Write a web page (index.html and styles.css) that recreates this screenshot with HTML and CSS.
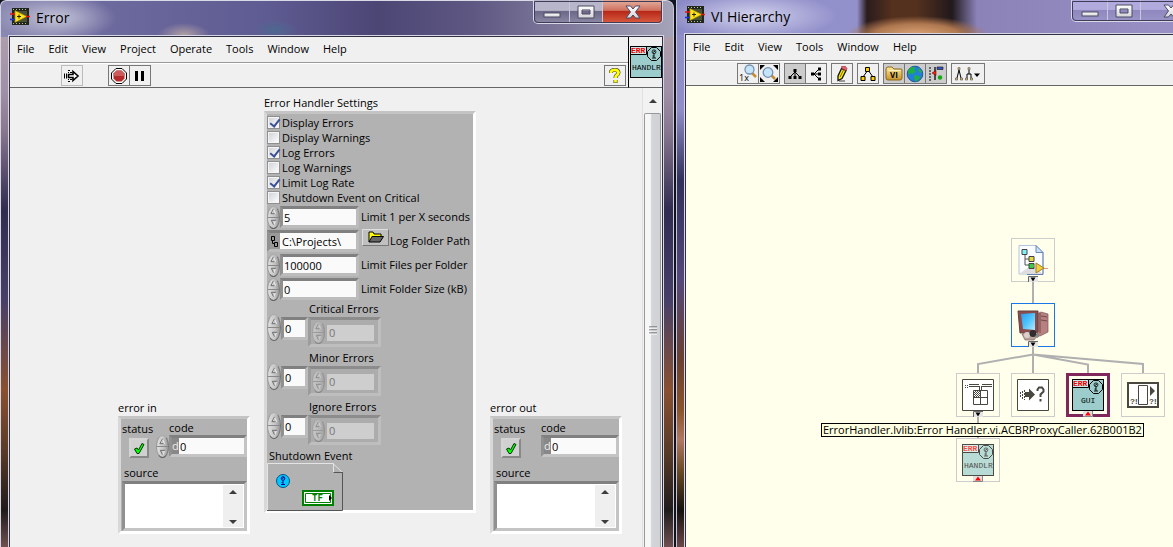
FILE: index.html
```html
<!DOCTYPE html>
<html lang="en">
<head>
<meta charset="utf-8">
<title>Error</title>
<link rel="stylesheet" href="styles.css">
</head>
<body>
<svg class="defs" aria-hidden="true">
  <defs>
    <linearGradient id="metal" x1="0" y1="0" x2="0" y2="1"><stop offset="0" stop-color="#fff"/><stop offset="1" stop-color="#d4d4d8"/></linearGradient>
    <linearGradient id="screen" x1="0" y1="0" x2="1" y2="1"><stop offset="0" stop-color="#2a9af0"/><stop offset=".5" stop-color="#4ec4fb"/><stop offset="1" stop-color="#b5e8ff"/></linearGradient>
    <linearGradient id="gold" x1="0" y1="0" x2="0" y2="1"><stop offset="0" stop-color="#ffeaa0"/><stop offset="1" stop-color="#c89428"/></linearGradient>
    <symbol id="app" viewBox="0 0 20 18">
      <rect x="2" y="0" width="17" height="17" fill="#20261c"/>
      <rect x="4" y="3" width="13" height="11" fill="#4b5137"/>
      <path d="M3 1.500h15M3 15.500h15" stroke="#b8c0a0" stroke-width="1" stroke-dasharray="1 2"/>
      <path d="M5 2.500L17 8.500L5 14.500z" fill="#ffe21a" stroke="#8a7600" stroke-width=".6"/>
      <path d="M7 8.500h4M9 6.500v4" stroke="#222"/>
      <path d="M0 6h5M16 8.500h4" stroke="#e11" stroke-width="1.600"/>
      <path d="M0 11.500h5" stroke="#13d" stroke-width="1.600"/>
    </symbol>
    <symbol id="min" viewBox="0 0 18 6"><rect x="1" y="1" width="16" height="4" fill="url(#metal)" stroke="#4a4b63"/></symbol>
    <symbol id="max" viewBox="0 0 18 14"><path d="M1 1h16v12H1zM5 5v4h8V5z" fill="url(#metal)" fill-rule="evenodd" stroke="#4a4b63"/></symbol>
    <symbol id="close" viewBox="0 0 16 14"><path d="M1 1h4.500L8 4L10.500 1H15L10.500 7L15 13H10.500L8 10L5.500 13H1L5.500 7z" fill="url(#metal)" stroke="#4a4b63"/></symbol>
    <symbol id="up" viewBox="0 0 8 8"><path d="M1.500 6.500L4 1.500L6.500 6.500" fill="none" stroke="#f4f4f4"/><path d="M1 6.500L4 1M1 6.500h4" fill="none" stroke="#606060"/></symbol>
    <symbol id="down" viewBox="0 0 8 8"><path d="M6.500 1.500L4 7" fill="none" stroke="#f4f4f4"/><path d="M7 1.500H1.500L4 6.500" fill="none" stroke="#606060"/></symbol>
    <symbol id="tri-up" viewBox="0 0 8 4"><path d="M0 4L4 0L8 4z" fill="#3c3c3c"/></symbol>
    <symbol id="tri-down" viewBox="0 0 8 4"><path d="M0 0L4 4L8 0z" fill="#3c3c3c"/></symbol>
    <symbol id="figure" viewBox="0 0 14 14">
      <path d="M4.500.5h5l4 4v5l-4 4h-5l-4-4v-5z" fill="#9ccccc" stroke="#000"/>
      <circle cx="7" cy="4.800" r="1.900" fill="none" stroke="#000" stroke-width=".8"/>
      <path d="M6 5.500l2-1.500M7 7v4M5 11h4M5.500 9h1.500" fill="none" stroke="#000" stroke-width=".9"/>
    </symbol>
    <symbol id="handler" viewBox="0 0 32 32">
      <rect x=".5" y=".5" width="31" height="31" fill="#9ccccc" stroke="#000"/>
      <path d="M.5.5h16v8H.5z" fill="#cfe6e6" stroke="#000"/>
      <text x="1" y="7" class="px red">ERR</text>
      <use href="#figure" x="17" y="1" width="14" height="14"/>
    </symbol>
    <symbol id="check" viewBox="0 0 12 13"><path d="M1.500 7l2.500-1l1.500 2L9 1.500l2 1L6 11.500H4z" fill="#0f0" stroke="#053305"/></symbol>
    <symbol id="tab-down" viewBox="0 0 10 6"><path d="M0 0h10v6H0z" fill="#e6e6e6"/><path d="M.5 6V.5H10" fill="none" stroke="#666"/><path d="M2.500 1.500h5L5 5.500z"/></symbol>
    <symbol id="tab-up" viewBox="0 0 10 6"><path d="M0 0h10v6H0z" fill="#e0e0e0"/><path d="M0 5.500h9.500V0" fill="none" stroke="#888"/><path d="M2 4.500h6L5 .5z" fill="#f00"/></symbol>
  </defs>
</svg>

<main class="desktop">
  <section class="window win-error">
    <header class="titlebar">
      <svg class="app-icon"><use href="#app"/></svg>
      <h1 class="title">Error</h1>
      <div class="caption">
        <button class="cap cap-min" aria-label="Minimize"><svg width="18" height="6"><use href="#min"/></svg></button>
        <button class="cap cap-max" aria-label="Maximize"><svg width="18" height="14"><use href="#max"/></svg></button>
        <button class="cap cap-close" aria-label="Close"><svg width="16" height="14"><use href="#close"/></svg></button>
      </div>
    </header>
    <div class="client">
      <div class="head">
        <div class="bars">
          <nav class="menu">
            <button>File</button><button>Edit</button><button>View</button><button>Project</button><button>Operate</button><button>Tools</button><button>Window</button><button>Help</button>
          </nav>
          <div class="toolbar tools-left">
            <button class="tool run" aria-label="Run"><svg width="16" height="14" viewBox="0 0 16 14"><path d="M.5 4.500v5M2.500 4.500v5" stroke="#000"/><path d="M4 1.500h2M6 3.500h2M4 12.500h2M6 10.500h2M4 3.500h1M4 10.500h1" stroke="#000"/><path d="M4.500 5.500H9V2.500L14 7L9 11.500V8.500H4.500z" fill="#fff" stroke="#000" stroke-width="1.600"/></svg></button>
            <div class="group">
              <button class="tool" aria-label="Abort"><svg width="16" height="16" viewBox="0 0 16 16"><path d="M5 .5h6L15.500 5v6L11 15.500H5L.5 11V5z" fill="#fff" stroke="#000"/><path d="M5.500 2.500h5l3 3v5l-3 3h-5l-3-3v-5z" fill="#b52a2a"/><path d="M5.500 2.500h5l3 3V8h-11V5.500z" fill="#cc5c5c"/></svg></button>
              <button class="tool" aria-label="Pause"><svg width="10" height="10"><path d="M0 0h3v10H0zM6 0h3v10H6z"/></svg></button>
            </div>
            <button class="tool help" aria-label="Context help"><svg width="12" height="16" viewBox="0 0 12 16"><path d="M2 5V3.500Q3 1.800 6 1.800T9.500 4.500Q9.500 6 7.500 7.500Q6.500 8.500 6.500 10M6.500 12v3" fill="none" stroke="#444" stroke-width="4"/><path d="M2 5V3.500Q3 1.800 6 1.800T9.500 4.500Q9.500 6 7.500 7.500Q6.500 8.500 6.500 10M6.500 12v2.500" fill="none" stroke="#ff0" stroke-width="2.800"/></svg></button>
          </div>
        </div>
        <div class="icon-pane"><svg width="32" height="32" viewBox="0 0 32 32"><use href="#handler"/><text x="2" y="24" class="px">HANDLR</text></svg></div>
      </div>
      <div class="body">
        <div class="panel">
          <fieldset class="group-box">
            <legend>error in</legend>
            <div class="cluster error-cluster">
              <div class="error-top">
                <div class="field status"><label for="in-status">status</label><button id="in-status" class="led" aria-label="status"><svg width="12" height="13"><use href="#check"/></svg></button></div>
                <div class="field code"><label for="in-code">code</label>
                  <div class="num"><span class="spin"><button aria-label="Increment"><svg><use href="#up"/></svg></button><button aria-label="Decrement"><svg><use href="#down"/></svg></button></span><span class="inset inset-light"><span class="radix">d</span><input id="in-code" value="0"></span></div>
                </div>
              </div>
              <div class="field source"><label for="in-source">source</label>
                <div class="inset inset-light text-area"><textarea id="in-source"></textarea><span class="mini-scroll"><svg width="8" height="4"><use href="#tri-up"/></svg><svg width="8" height="4"><use href="#tri-down"/></svg></span></div>
              </div>
            </div>
          </fieldset>

          <fieldset class="group-box settings">
            <legend>Error Handler Settings</legend>
            <div class="cluster settings-cluster">
              <label class="check"><input type="checkbox" checked>Display Errors</label>
              <label class="check"><input type="checkbox">Display Warnings</label>
              <label class="check"><input type="checkbox" checked>Log Errors</label>
              <label class="check"><input type="checkbox">Log Warnings</label>
              <label class="check"><input type="checkbox" checked>Limit Log Rate</label>
              <label class="check"><input type="checkbox">Shutdown Event on Critical</label>
              <div class="limits">
                <div class="limit"><span class="spin"><button aria-label="Increment"><svg><use href="#up"/></svg></button><button aria-label="Decrement"><svg><use href="#down"/></svg></button></span><span class="inset"><input id="rate" value="5"></span><label for="rate">Limit 1 per X seconds</label></div>
                <div class="limit path"><span class="inset wide"><svg class="path-icon" width="7" height="11" viewBox="0 0 7 11"><path d="M.5.5h3v4h-3zM3.500 6.500h3v4h-3zM1.500 4.500v3h2" fill="none" stroke="#000"/></svg><input id="folder" value="C:\Projects\"></span><button class="browse" aria-label="Browse"><svg width="16" height="12" viewBox="0 0 16 12"><path d="M1 11V1h4l1 2h7v2" fill="#ff0" stroke="#000"/><path d="M1 11L4 5.500h11.500L12 11z" fill="#666" stroke="#000"/></svg></button><label for="folder">Log Folder Path</label></div>
                <div class="limit"><span class="spin"><button aria-label="Increment"><svg><use href="#up"/></svg></button><button aria-label="Decrement"><svg><use href="#down"/></svg></button></span><span class="inset"><input id="files" value="100000"></span><label for="files">Limit Files per Folder</label></div>
                <div class="limit"><span class="spin"><button aria-label="Increment"><svg><use href="#up"/></svg></button><button aria-label="Decrement"><svg><use href="#down"/></svg></button></span><span class="inset"><input id="size" value="0"></span><label for="size">Limit Folder Size (kB)</label></div>
              </div>
              <div class="array"><label for="crit">Critical Errors</label>
                <div class="array-row"><span class="spin"><button aria-label="Increment"><svg><use href="#up"/></svg></button><button aria-label="Decrement"><svg><use href="#down"/></svg></button></span><span class="inset index"><input id="crit" value="0"></span><span class="element"><span class="spin"><button disabled aria-label="Increment"><svg><use href="#up"/></svg></button><button disabled aria-label="Decrement"><svg><use href="#down"/></svg></button></span><input value="0" disabled aria-label="Critical error"></span></div>
              </div>
              <div class="array"><label for="minor">Minor Errors</label>
                <div class="array-row"><span class="spin"><button aria-label="Increment"><svg><use href="#up"/></svg></button><button aria-label="Decrement"><svg><use href="#down"/></svg></button></span><span class="inset index"><input id="minor" value="0"></span><span class="element"><span class="spin"><button disabled aria-label="Increment"><svg><use href="#up"/></svg></button><button disabled aria-label="Decrement"><svg><use href="#down"/></svg></button></span><input value="0" disabled aria-label="Minor error"></span></div>
              </div>
              <div class="array"><label for="ignore">Ignore Errors</label>
                <div class="array-row"><span class="spin"><button aria-label="Increment"><svg><use href="#up"/></svg></button><button aria-label="Decrement"><svg><use href="#down"/></svg></button></span><span class="inset index"><input id="ignore" value="0"></span><span class="element"><span class="spin"><button disabled aria-label="Increment"><svg><use href="#up"/></svg></button><button disabled aria-label="Decrement"><svg><use href="#down"/></svg></button></span><input value="0" disabled aria-label="Ignored error"></span></div>
              </div>
              <div class="event"><span>Shutdown Event</span>
                <svg width="76" height="48" viewBox="0 0 76 48"><path d="M.5 48V.5H66L75.500 9.500H66.500V.5" fill="none" stroke="#e4e4e4"/><path d="M75.500 9v38.500H0M66.500 9.500h9" fill="none" stroke="#555"/><circle cx="16" cy="18" r="6.500" fill="#00c8ff" stroke="#00568a"/><circle cx="16" cy="15.500" r="1.800" fill="none" stroke="#008"/><path d="M15 15.500l2-1M16 17.500v4M14 21.500h4M14.500 19.500h1" stroke="#008" fill="none"/><path d="M36 28h30v14H36z" fill="#fff" stroke="#008000" stroke-width="2"/><path d="M38.500 30.500h25v9h-25z" fill="#fff" stroke="#008000"/><text x="45" y="38" class="tf">TF</text><path d="M62 32v6l3-3z"/></svg>
              </div>
            </div>
          </fieldset>

          <fieldset class="group-box">
            <legend>error out</legend>
            <div class="cluster error-cluster">
              <div class="error-top">
                <div class="field status"><label for="out-status">status</label><button id="out-status" class="led" aria-label="status"><svg width="12" height="13"><use href="#check"/></svg></button></div>
                <div class="field code"><label for="out-code">code</label>
                  <div class="num no-spin"><span class="inset inset-light"><span class="radix">d</span><input id="out-code" value="0" readonly></span></div>
                </div>
              </div>
              <div class="field source"><label for="out-source">source</label>
                <div class="inset inset-light text-area"><textarea id="out-source" readonly></textarea><span class="mini-scroll"><svg width="8" height="4"><use href="#tri-up"/></svg><svg width="8" height="4"><use href="#tri-down"/></svg></span></div>
              </div>
            </div>
          </fieldset>
        </div>
        <div class="scrollbar"><button aria-label="Scroll up"><svg width="8" height="4"><use href="#tri-up"/></svg></button><div class="thumb"><svg width="8" height="9"><path d="M0 1h8M0 4h8M0 7h8" stroke="#555"/><path d="M0 2h8M0 5h8M0 8h8" stroke="#fff"/></svg></div></div>
      </div>
    </div>
  </section>

  <section class="window win-tree">
    <header class="titlebar">
      <svg class="app-icon"><use href="#app"/></svg>
      <h1 class="title">VI Hierarchy</h1>
      <div class="caption">
        <button class="cap cap-min" aria-label="Minimize"><svg width="18" height="6"><use href="#min"/></svg></button>
        <button class="cap cap-max" aria-label="Maximize"><svg width="18" height="14"><use href="#max"/></svg></button>
        <button class="cap cap-close" aria-label="Close"><svg width="16" height="14"><use href="#close"/></svg></button>
      </div>
    </header>
    <div class="client">
      <div class="bars">
        <nav class="menu"><button>File</button><button>Edit</button><button>View</button><button>Tools</button><button>Window</button><button>Help</button></nav>
        <div class="toolbar tools-right">
          <div class="group">
            <button class="tool" aria-label="Zoom to 1x"><svg width="20" height="19" viewBox="0 0 20 19"><path d="M14 9l4 4" stroke="#c88a30" stroke-width="2.500"/><circle cx="11.500" cy="5.500" r="4.500" fill="#c4e4fa" stroke="#7890b0" stroke-width="1.300"/><text x="1" y="17" class="one">1x</text></svg></button>
            <button class="tool" aria-label="Zoom to fit"><svg width="20" height="19" viewBox="0 0 20 19"><path d="M1 1h5L1 6zM19 1h-5l5 5zM1 18h5l-5-5zM19 18h-5l5-5z"/><path d="M12 11l4 4" stroke="#c88a30" stroke-width="2.500"/><circle cx="9" cy="8.500" r="4.800" fill="#c4e4fa" stroke="#7890b0" stroke-width="1.300"/></svg></button>
          </div>
          <div class="group">
            <button class="tool pressed" aria-label="Top to bottom"><svg width="14" height="12" viewBox="0 0 14 12"><path d="M7 2v8M7 4L2 9M7 4l5 5" stroke="#000" fill="none"/><path d="M5.500 1h3v3h-3zM.5 8h3v3h-3zM5.500 8h3v3h-3zM10.500 8h3v3h-3z"/></svg></button>
            <button class="tool" aria-label="Left to right"><svg width="12" height="14" viewBox="0 0 12 14"><path d="M2 7h8M4 7L9 2M4 7l5 5" stroke="#000" fill="none"/><path d="M1 5.500h3v3H1zM8 .5h3v3H8zM8 5.500h3v3H8zM8 10.500h3v3H8z"/></svg></button>
          </div>
          <button class="tool" aria-label="Redo layout"><svg width="14" height="17" viewBox="0 0 14 17"><path d="M4 16h6" stroke="#999" stroke-width="2"/><path d="M6.500 3.500L11 5.500L7 13.500L3 15.500V11z" fill="#fe0" stroke="#111" stroke-width="1.300"/><path d="M6.500 1.500h4l1.500 2-1 2-4-2z" fill="#e56070" stroke="#a03040" stroke-width=".7"/><path d="M8.500 5L5 12" stroke="#806000"/></svg></button>
          <button class="tool" aria-label="Hierarchy"><svg width="16" height="16" viewBox="0 0 16 16"><path d="M8 4L3 11M8 4l5 7" stroke="#000"/><path d="M5.500 1.500h4v4h-4zM1 10.500h4v4H1zM11 10.500h4v4h-4z" fill="#fc0" stroke="#000"/></svg></button>
          <div class="group">
            <button class="tool pressed" aria-label="Include VI Lib"><svg width="18" height="15" viewBox="0 0 18 15"><path d="M1 3q0-2 2-2h4l2 2h7q1 0 1 1v8q0 2-2 2H3q-2 0-2-2z" fill="url(#gold)" stroke="#8c661c"/><path d="M3.500 4.500h12" stroke="#fff3c0"/><text x="5" y="12" class="vi">VI</text></svg></button>
            <button class="tool pressed" aria-label="Include globals"><svg width="18" height="18" viewBox="0 0 18 18"><circle cx="9" cy="9" r="7.800" fill="#2080d8" stroke="#2456a0"/><path d="M3 4q3-3 6-2l-1 3 2 1-3 3-2-1-2 2q-2-3 0-6zM9 10l4 1 1 2-4 4-2-4zM13 3l3 4-2 1-2-3z" fill="#20b040"/></svg></button>
            <button class="tool pressed" aria-label="Include type definitions"><svg width="16" height="16" viewBox="0 0 16 16"><path d="M1 2h2M1 5h2M1 8h2M1 11h2M1 14h2" stroke="#000"/><path d="M7 1v13" stroke="#222" stroke-width="1.500"/><path d="M9 1h6v2.500H9z" fill="#3050d0" stroke="#222" stroke-width=".7"/><path d="M4 7l4-2.500v5z" fill="#f20" stroke="#400" stroke-width=".5"/><circle cx="12" cy="11.500" r="2.200" fill="#1a1"/></svg></button>
          </div>
          <button class="tool drop" aria-label="Expand options"><svg width="26" height="14" viewBox="0 0 26 14"><path d="M4 3L2 11M4 3l2 8M14 3v4M12 12V7h4v5" fill="none" stroke="#000"/><path d="M3 .7h2v2H3zM.5 11h2v2h-2zM5.500 11h2v2h-2zM13 .7h2v2h-2zM10.500 11h2v2h-2zM15.500 11h2v2h-2z" fill="#ec6" stroke="#555" stroke-width=".7"/><path d="M19 6.500h6L22 10z"/></svg></button>
        </div>
      </div>
      <div class="tree">
        <svg class="links" width="487" height="461" aria-hidden="true"><path d="M347 195v23M347 260v27M292 287v-9l55-9.500l110 9.500V287M347 268.500l55 10V287M292 330v22" fill="none" stroke="#b0b0b0" stroke-width="2"/></svg>
        <div class="node n-project"><svg width="30" height="32" viewBox="0 0 30 32"><path d="M1 1.500h17l7 7V30H1z" fill="#fafcff" stroke="#b0c4dc"/><path d="M1 30L14 21l11 9z" fill="#ddd"/><path d="M25 8.500V30.500H9" fill="none" stroke="#6680b0"/><path d="M18 1.500v7h7z" fill="#cde0f4" stroke="#6688bb"/><path d="M7 9v12h5M7 15h5" fill="none" stroke="#555"/><path d="M4 5.500h5v5H4z" fill="#80f0f8" stroke="#444"/><path d="M11 12.500h5v5h-5z" fill="#e8d840" stroke="#444"/><path d="M11 19.500h5v5h-5z" fill="#30d040" stroke="#444"/><path d="M18 19l8 5-8 5z" fill="#f0d040" stroke="#a08020"/><path d="M15 22h3M26 24.500h4" stroke="#e09090"/></svg><svg class="tab" width="10" height="6"><use href="#tab-down"/></svg></div>
        <div class="node n-computer"><svg width="32" height="32" viewBox="0 0 32 32"><path d="M20 5l4-2 7 2v18l-8 4-3-3z" fill="#b88080" stroke="#775555" stroke-width=".7"/><path d="M23 4v20M24 7l6 1M24 11l6 1" stroke="#704c4c"/><path d="M1 2l20 0v21l-18 1z" fill="#8a4c4c" stroke="#65403e"/><path d="M4 5l14-1v17L6 20z" fill="url(#screen)"/><path d="M5 25l7-2 9 3-4 5H8z" fill="#baa4a0" stroke="#806464" stroke-width=".7"/><circle cx="10" cy="26" r="3" fill="#dcd0cc"/><circle cx="16" cy="24.500" r="3.500" fill="#302e2e"/><path d="M19 28l3-2" stroke="#888" stroke-width="3"/></svg><svg class="tab" width="10" height="6"><use href="#tab-down"/></svg></div>
        <div class="node n-table"><svg width="32" height="32" viewBox="0 0 32 32"><path d="M.5.5h31v31H.5z" fill="#fff" stroke="#484840"/><path d="M3 6.500h3M3 8.500h3" stroke="#484840" stroke-dasharray="1 1"/><path d="M7 5.500h10M20 5.500h10M7 7.500h10M20 7.500h10M17.500 7v4M19.500 7v4M11.500 11.500h14v14h-14zM18.500 11.500v14M11.500 18.500h14" fill="none" stroke="#484840"/><path d="M12 13.500h6M12 15.500h6M12 17.500h6M13 12.500h6M13 14.500h6M13 16.500h6" stroke="#484840" stroke-dasharray="1 1"/></svg><svg class="tab" width="10" height="6"><use href="#tab-down"/></svg></div>
        <div class="node n-arrow"><svg width="32" height="32" viewBox="0 0 32 32"><path d="M.5.5h31v31H.5z" fill="#fff" stroke="#484840"/><path d="M3.500 13v6M5.500 12v8M7.500 11v10" stroke="#484840" stroke-dasharray="2 1"/><path d="M8 13h4V9.500l6 6-6 6V18H8z" fill="#484840"/><path d="M20.500 12v-1.500l1.500-2h3l1.500 2v2l-3 3v2.500M23.500 20v2.500" fill="none" stroke="#484840" stroke-width="2"/></svg></div>
        <div class="node n-gui"><svg width="32" height="32" viewBox="0 0 32 32"><use href="#handler"/><text x="9" y="24" class="px">GUI</text></svg><svg class="tab" width="10" height="6"><use href="#tab-up"/></svg></div>
        <div class="node n-run"><svg width="32" height="26" viewBox="0 0 32 26"><path d="M1 1h30v24H1z" fill="#fff" stroke="#484840" stroke-width="2"/><path d="M11.500 3.500h9v19h-9z" fill="#fff" stroke="#484840"/><path d="M23 4v10l5-5z" fill="#484840"/><text x="3" y="22" class="bang">?!</text><text x="22" y="22" class="bang">?!</text></svg></div>
        <div class="node n-handler"><svg width="32" height="32" viewBox="0 0 32 32"><use href="#handler"/><text x="2" y="24" class="px">HANDLR</text></svg><svg class="tab" width="10" height="6"><use href="#tab-up"/></svg></div>
        <div class="tooltip" role="tooltip">ErrorHandler.lvlib:Error Handler.vi.ACBRProxyCaller.62B001B2</div>
      </div>
    </div>
  </section>
</main>
</body>
</html>
```
FILE: styles.css
```css
* { box-sizing: border-box; }
body { margin: 0; overflow: hidden; font: 11px/16px "Open Sans", "Noto Sans", sans-serif; color: #000; }
button, input, textarea { font: inherit; color: inherit; margin: 0; padding: 0; border: 0; border-radius: 0; min-width: 0; }
button { background: none; display: flex; align-items: center; justify-content: center; }
svg { display: block; flex: none; }
.defs { position: absolute; width: 0; height: 0; }

/* windows */
.desktop { display: grid; grid-template-columns: 674fr 499fr; height: 100vh; overflow: hidden; background: #10121e; }
.window { display: flex; flex-direction: column; min-width: 0; position: relative; }
.win-error {
  padding: 0 11px 0 9px;
  border-radius: 6px 8px 0 0;
  box-shadow: inset 0 1px #d8dae8, inset -1px 0 #c8c8d8, inset 1px 0 #d4d4e0;
  background:
    radial-gradient(ellipse 60px 24px at 56px 18px, #c4c4d8 0, transparent 100%),
    radial-gradient(ellipse 26px 12px at 184px 35px, #b0a0a4 0, transparent 100%),
    radial-gradient(ellipse 22px 10px at 275px 30px, #4e6890 0, transparent 100%),
    linear-gradient(90deg, #8a89b2 0, #6d6a9e 15%, #5e5b92 40%, #4b4674 56%, #5e5782 70%, #8480a0 86%, #a5a3b8 100%) 0 0 / 100% 37px no-repeat,
    linear-gradient(#b8a8ac 0, #a090a8 90px, #8a7890 130px, #302c50 210px, #484068 300px, #8a5030 390px, #5a3c28 450px, #201c1c 510px, #705050 547px);
}
.win-tree {
  margin-left: 2px;
  padding-left: 8px;
  border-left: 1px solid #c4c4dc;
  background:
    radial-gradient(ellipse 85px 24px at 75px 16px, #d4d4ee 0, transparent 100%),
    radial-gradient(ellipse 72px 20px at 240px 36px, #e0a878 0, #b07850 60%, transparent 100%) 0 0 / 100% 35px no-repeat,
    linear-gradient(90deg, transparent 180px, #2a1c1c 190px, #54301e 215px, #54301e 240px, #21191c 275px, transparent 300px) 0 0 / 100% 35px no-repeat,
    linear-gradient(90deg, #8b8ac6, #9391cb 35%, #8b82b8 60%, #9890c4) 0 0 / 100% 35px no-repeat,
    linear-gradient(#8f8ec8 0, #8f8ec8 110px, #303058 180px, #544878 280px, #6a4030 360px, #8a5428 410px, #b07860 440px, #6c4c24 470px, #14120e 510px, #6a4848 547px);
}
.titlebar { display: flex; align-items: flex-start; }
.win-error .titlebar { height: 36px; }
.win-tree .titlebar { height: 34px; }
.app-icon { width: 20px; height: 18px; margin: 8px 0 0 1px; }
.title { margin: 7px 0 0 6px; font-size: 14px; line-height: 22px; font-weight: 400; white-space: nowrap; }
.win-tree .title { margin-top: 6px; }
.win-tree .app-icon { margin-top: 6px; margin-left: 0; }
.caption { display: flex; height: 24px; margin-left: auto; border: 1px solid #d8d8e6; border-top: 0; border-radius: 0 0 5px 5px; outline: 1px solid #3f3c5a; outline-offset: -2px; overflow: hidden; }
.cap { height: 100%; border-right: 1px solid #c8c8dc; background: linear-gradient(#b8b6cb 45%, #6b6888 50%, #8c89a6); }
.cap-min { width: 36px; padding-top: 7px; }
.cap-max { width: 33px; }
.cap-close { width: 59px; border-right: 0; background: linear-gradient(#e0a493 10%, #d0705e 45%, #b82818 50%, #d85c40); }
.win-tree .caption { height: 22px; margin-right: -28px; flex: none; }
.win-tree .cap { background: linear-gradient(#b0abdc 45%, #8f88be 50%, #9a94c8); }
.client { flex: 1; display: flex; flex-direction: column; min-height: 0; background: #f0f0f0; border: 1px solid #303040; border-bottom: 0; box-shadow: 0 0 0 1px #d6d6e4; }
.win-tree .client { border-right: 0; }

/* menus and toolbars */
.head { display: flex; flex: none; }
.bars { border-bottom: 1px solid #666; }
.head .bars { flex: 1; }
.menu { display: flex; gap: 14px; height: 26px; padding-left: 7px; border-bottom: 1px solid #999; }
.menu button { height: 24px; }
.toolbar { display: flex; align-items: center; height: 24px; border-top: 1px solid #fff; }
.tools-left { padding: 0 2px 0 51px; gap: 25px; }
.tools-right { padding-left: 51px; gap: 4px; }
.group { display: flex; }
.tool { width: 22px; height: 21px; border: 1px solid #777; }
.group .tool + .tool { margin-left: -1px; }
.run { border-color: #bbb; }
.help { margin-left: auto; }
.pressed { background: #ccc; }
.drop { width: 34px; }
.icon-pane { width: 34px; flex: none; display: flex; align-items: center; justify-content: center; border-left: 1px solid #000; border-bottom: 1px solid #666; background: #f0f0f0; }
.px { font: 8px "Liberation Mono", monospace; stroke: currentColor; stroke-width: 0; }
.red { font-weight: bold; fill: #e00; }
.one { font: 9px "Open Sans", sans-serif; }
.vi { font: bold 8px "Open Sans", sans-serif; }
.bang { font: bold 8px "Liberation Sans", sans-serif; fill: #484840; }
.tf { font: bold 9px "DejaVu Sans Mono", monospace; fill: #008000; }

/* front panel */
.body { display: flex; flex: 1; min-height: 0; }
.panel { flex: 1; display: flex; gap: 14px; align-items: flex-end; align-self: flex-start; padding: 7px 0 0 108px; min-width: 0; }
.group-box { margin: 0; padding: 0; border: 0; min-width: 0; flex: none; }
legend { display: block; padding: 0; height: 16px; }
.settings { width: 212px; margin-bottom: 21px; }
.cluster { border: 3px solid; border-color: #c4c4c4 #fff #fff #d8d8d8; background: #b2b2b2; }
.settings-cluster { height: 402px; }
.check { display: flex; align-items: center; height: 15px; gap: 3px; }
.check:first-child { margin-top: 1px; }
.check input { appearance: none; flex: none; width: 13px; height: 13px; margin: 0; border: 1px solid #8e8f8f; background: linear-gradient(135deg, #cdd0d6, #fff); box-shadow: inset 0 0 0 1px #f4f4f4; }
.check input:checked::after { content: ""; display: block; width: 4px; height: 8px; margin: 0 0 0 4px; border: solid #3b4f96; border-width: 0 2px 2px 0; transform: rotate(38deg); }
.check { gap: 2px; }
.limit { display: flex; align-items: center; height: 24px; white-space: nowrap; }
.spin { flex: none; display: flex; flex-direction: column; width: 13px; height: 23px; border-radius: 50%; border: 1px solid #777; border-color: #aaa #777 #666 #999; background: linear-gradient(90deg, #e0e0e0, #c4c4c4 60%, #999); overflow: hidden; }
.spin button { flex: 1; width: 100%; }
.spin button + button { border-top: 1px solid #888; }
.spin svg { width: 7px; height: 7px; }
.inset { display: flex; align-items: center; border: 3px solid; border-color: #808080 #bcbcbc #bcbcbc #909090; background: #fafafa; }
.inset input { width: 100%; height: 100%; padding-left: 1px; background: #fafafa; line-height: 16px; }
.limit .inset { width: 79px; height: 22px; margin-right: 2px; flex: none; }
.limit .inset.wide { width: 92px; margin-right: 3px; background: #999; }
.path-icon { margin: 0 2px 0 1px; }
.path .inset input { padding-left: 2px; }
.browse { width: 27px; height: 17px; margin: -8px 1px 0 0; border: 1px solid; border-color: #ddd #777 #777 #ddd; background: #c0c0c0; }
.array { margin-bottom: 3px; }
.array label { display: block; height: 16px; line-height: 16px; padding-left: 42px; }
.array-row { display: flex; align-items: flex-start; height: 30px; }
.array-row > .spin { width: 14px; height: 27px; margin-top: -3px; }
.index { width: 27px; height: 23px; }
.element { display: flex; align-items: center; width: 73px; height: 30px; padding: 0 4px 0 1px; border: 3px solid; border-color: #8c8c8c #bebebe #bebebe #9c9c9c; background: #acacac; }
.element .spin { opacity: .5; }
.element input { width: 47px; height: 16px; margin: 1px 0 0 2px; padding-left: 2px; background: #cecece; color: #777; }
.event { line-height: 15px; }
.event span { display: block; padding-left: 2px; }
.error-cluster { width: 132px; height: 118px; padding: 2px 0 0 1px; }
.error-top { display: flex; height: 44px; }
.status { width: 34px; }
.status label { display: block; white-space: nowrap; }
.led { width: 20px; height: 20px; margin: 1px 0 0 7px; border: 2px solid; border-color: #d4d4d4 #888 #888 #d4d4d4; background: #d0d0d0; }
.code { flex: 1; }
.code label { display: block; height: 14px; line-height: 14px; margin-left: 13px; }
.num { display: flex; }
.num.no-spin { padding-left: 13px; }
.num .inset { flex: 1; height: 22px; min-width: 0; }
.inset-light { border-color: #808080 #c4c4c4 #c4c4c4 #909090; }
.radix { width: 7px; height: 16px; background: #888; color: #eee; flex: none; overflow: hidden; line-height: 15px; }
.source label { display: block; padding-left: 2px; height: 16px; }
.text-area { height: 50px; }
.text-area textarea { flex: 1; width: 0; height: 100%; resize: none; background: #fff; overflow: hidden; }
.text-area { background: #fff; }
.mini-scroll { display: flex; flex-direction: column; align-items: center; justify-content: space-between; width: 20px; height: 42px; padding: 5px 0 3px; margin-right: 1px; background: #efefef; }
.scrollbar { width: 20px; display: flex; flex-direction: column; padding: 0 1px; border-left: 1px solid #e0e0e0; background: #f2f2f2; }
.scrollbar button { height: 25px; }
.thumb { flex: 1; display: flex; align-items: center; justify-content: center; border: 1px solid #999; border-bottom: 0; border-radius: 2px 2px 0 0; background: linear-gradient(90deg, #f7f7f7 35%, #d2d4d8 45%, #d0d2d6); }

/* hierarchy canvas */
.tree { position: relative; flex: 1; background: #ffffec; overflow: hidden; }
.links { position: absolute; left: 0; top: 0; }
.node { position: absolute; width: 44px; height: 44px; border: 1px solid #ccc; display: flex; align-items: center; justify-content: center; }
.tab { position: absolute; left: 16px; bottom: -1px; }
.n-project { left: 325px; top: 152px; }
.n-computer { left: 325px; top: 217px; border-color: #1878e8; }
.n-table { left: 270px; top: 287px; }
.n-arrow { left: 325px; top: 287px; }
.n-gui { left: 380px; top: 287px; border: 3px solid #80285c; }
.n-gui .tab { left: 14px; bottom: -3px; }
.n-run { left: 435px; top: 287px; }
.n-handler { left: 270px; top: 352px; }
.n-handler svg:first-child { opacity: .7; }
.tooltip { position: absolute; left: 135px; top: 337px; height: 14px; padding: 0 1px; border: 1px solid #000; background: #ffffe1; line-height: 12px; white-space: nowrap; }
```
